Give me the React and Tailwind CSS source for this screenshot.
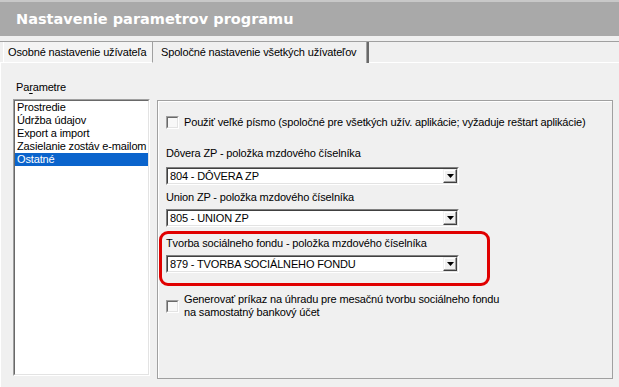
const Combo = ({ value }) => (
  <div className="h-[18px] w-[293px] border border-t-[#808080] border-l-[#808080] border-r-[#ffffff] border-b-[#ffffff]">
    <div className="flex h-full items-center border border-t-[#404040] border-l-[#404040] border-r-[#e3e3e3] border-b-[#e3e3e3] bg-white">
      <span className="flex-1 pl-[2px] leading-[13px]">{value}</span>
      <div className="flex h-[14px] w-[14px] items-center justify-center border border-t-[#f0f0f0] border-l-[#f0f0f0] border-r-[#404040] border-b-[#404040] bg-[#f0f0f0] shadow-[inset_-1px_-1px_0_#a0a0a0,inset_1px_1px_0_#fff]">
        <svg width="7" height="4" viewBox="0 0 7 4">
          <path d="M0 0h7L3.5 4z" fill="#000" />
        </svg>
      </div>
    </div>
  </div>
);

const Check = () => (
  <div className="h-[13px] w-[13px] shrink-0 border border-t-[#a0a0a0] border-l-[#a0a0a0] border-r-[#ffffff] border-b-[#ffffff]">
    <div className="h-full w-full border border-t-[#696969] border-l-[#696969] border-r-[#e3e3e3] border-b-[#e3e3e3] bg-[#f8f8f8]" />
  </div>
);

const ITEMS = ["Prostredie", "Údržba údajov", "Export a import", "Zasielanie zostáv e-mailom"];

export default function App() {
  return (
    <div className="flex h-[387px] w-[619px] flex-col overflow-hidden bg-[#f0f0f0] text-[11px] leading-[13px] tracking-[-0.15px] text-black" style={{ fontFamily: '"Liberation Sans", Arial, sans-serif' }}>
      {/* Title */}
      <div className="flex h-[36px] shrink-0 items-center border-t-2 border-[#c8c8c8] bg-[#a9a9a9] pl-[16px]">
        <span className="text-[14.5px] font-bold tracking-normal text-white" style={{ fontFamily: '"DejaVu Sans", Verdana, sans-serif' }}>
          Nastavenie parametrov programu
        </span>
      </div>

      {/* Tabs */}
      <div className="mt-[5px] flex h-[22px] shrink-0 border-t border-[#a0a0a0]">
        <div className="w-[3px] border-b border-white" />
        <div className="flex w-[150px] items-center whitespace-nowrap border-b border-l border-r border-b-white border-l-white border-r-[#a0a0a0] bg-[#f4f4f4] pl-[4px] pt-[1px]">
          Osobné nastavenie užívateľa
        </div>
        <div className="flex w-[216px] items-center whitespace-nowrap border-r-2 border-[#696969] pl-[8px] shadow-[inset_-1px_0_0_#a0a0a0]">
          Spoločné nastavenie všetkých užívateľov
        </div>
        <div className="flex-1 border-b border-white" />
      </div>

      {/* Page */}
      <div className="flex flex-1 items-start border-l border-white pl-[12px]">
        <div className="flex w-[137px] flex-col">
          <div className="mt-[18px] mb-[5px] h-[13px] pl-[3px]">
            Pa<span className="underline underline-offset-2">r</span>ametre
          </div>
          <div className="h-[277px] border border-t-[#a0a0a0] border-l-[#a0a0a0] border-r-[#ffffff] border-b-[#ffffff]">
            <div className="h-full overflow-hidden border border-t-[#696969] border-l-[#696969] border-r-[#e3e3e3] border-b-[#e3e3e3] bg-white">
              {ITEMS.map((t) => (
                <div key={t} className="h-[13px] whitespace-nowrap pl-[2px]">{t}</div>
              ))}
              <div className="h-[13px] bg-[#0b64cc] pl-[2px] text-white">Ostatné</div>
            </div>
          </div>
        </div>

        <div className="relative mt-[37px] ml-[7px] flex h-[279px] w-[456px] flex-col border border-[#a0a0a0] pl-[8px] shadow-[inset_1px_1px_0_#fff]">
          <div className="mt-[15px] flex items-center gap-[5px] whitespace-nowrap">
            <Check />
            <span>Použiť veľké písmo (spoločné pre všetkých užív. aplikácie; vyžaduje reštart aplikácie)</span>
          </div>

          <div className="mt-[18px] h-[13px]">Dôvera ZP - položka mzdového číselníka</div>
          <div className="mt-[7px]">
            <Combo value="804 - DÔVERA ZP" />
          </div>

          <div className="mt-[6px] h-[13px]">Union ZP - položka mzdového číselníka</div>
          <div className="mt-[5px]">
            <Combo value="805 - UNION ZP" />
          </div>

          <div className="mt-[10px] h-[13px]">Tvorba sociálneho fondu - položka mzdového číselníka</div>
          <div className="mt-[5px]">
            <Combo value="879 - TVORBA SOCIÁLNEHO FONDU" />
          </div>

          <div className="mt-[20px] flex items-center gap-[5px]">
            <Check />
            <span>
              Generovať príkaz na úhradu pre mesačnú tvorbu sociálneho fondu
              <br />
              na samostatný bankový účet
            </span>
          </div>

          <div className="absolute left-[1px] top-[130px] h-[55px] w-[331px] rounded-[9px] border-[3px] border-[#e00000]" />
        </div>
      </div>
    </div>
  );
}
